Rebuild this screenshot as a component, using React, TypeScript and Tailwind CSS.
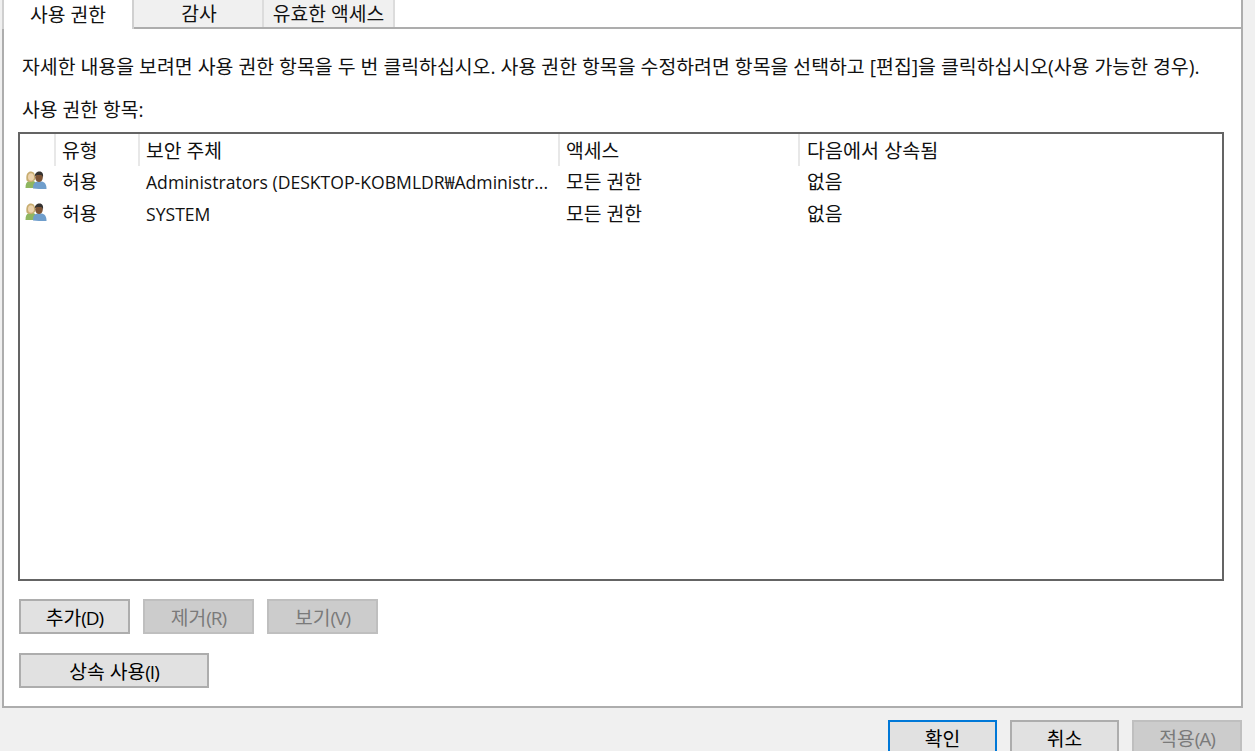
import React from 'react';

const FONT = { fontFamily: '"Open Sans", "Noto Sans CJK KR", sans-serif' };

const UserIcon: React.FC = () => (
  <svg width="22" height="18" viewBox="0 0 22 18" className="shrink-0">
    <path d="M0.500 17 C0.500 13 1.500 10.500 4 10 L8 10 C11 10.500 11.500 13 11.500 17 Z" fill="#8fb660" />
    <path d="M1.500 9.500 C0.500 3 3 0.500 6 0.500 C9.500 0.500 10.500 4 10 9 L7 11 L4 11 Z" fill="#c8ad70" />
    <ellipse cx="6" cy="6" rx="3" ry="3.800" fill="#ecd3ad" />
    <path d="M8 17.500 C8 14 8.500 11.500 12 10.500 L17 10.500 C20.500 11.500 21.500 14 21.500 18 L14 18 Z" fill="#6f9ecc" />
    <ellipse cx="14" cy="6.500" rx="3.800" ry="4.500" fill="#7d5435" />
    <path d="M9.800 5.500 C9.800 2 12 0.500 14.500 0.500 C17.500 0.500 18.500 3 18 6.500 L16.500 4 L11.500 4 Z" fill="#35322f" />
  </svg>
);

const Row: React.FC<{ name: string }> = ({ name }) => (
  <div className="flex h-[32px] items-center">
    <div className="flex w-[36px] justify-end pr-[9px] pb-[4px]"><UserIcon /></div>
    <div className="w-[84px] pl-[6px]">허용</div>
    <div className="w-[420px] pl-[6px] text-[17.6px] whitespace-nowrap">{name}</div>
    <div className="w-[240px] pl-[6px]">모든 권한</div>
    <div className="pl-[7px]">없음</div>
  </div>
);

const Btn: React.FC<{ label: string; hotkey: string; disabled?: boolean; width: string }> = ({ label, hotkey, disabled, width }) => (
  <button
    className={`${width} h-[35px] border-2 pt-[2px] text-center ${disabled ? 'border-[#bfbfbf] bg-[#cccccc] text-[#7a7a7a]' : 'border-[#adadad] bg-[#e1e1e1] text-black'}`}
  >
    {label}<span className="text-[19px] tracking-[-1px]">{hotkey}</span>
  </button>
);

const headers = [
  { label: '', w: 'w-[36px]' },
  { label: '유형', w: 'w-[84px]' },
  { label: '보안 주체', w: 'w-[420px]' },
  { label: '액세스', w: 'w-[240px]' },
];

export default function App() {
  return (
    <div style={FONT} className="flex h-[751px] w-[1255px] flex-col overflow-hidden bg-[#f0f0f0] text-[19.3px] leading-[22px] text-[#111111]">
      <div className="ml-[2px] flex h-[708px] w-[1241px] shrink-0 flex-col border-x-2 border-b-2 border-[#adadad] bg-white">
        <div className="flex h-[29px] shrink-0">
          <div className="-ml-[2px] flex h-[29px] w-[132px] items-center justify-center border-x-2 border-l-[#cfcfcf] border-r-[#d0d0d0] bg-white pt-[1px]">사용 권한</div>
          <div className="flex flex-1 border-b-2 border-[#adadad]">
            <div className="flex h-[27px] w-[130px] items-center justify-center border-r-2 border-[#dcdcdc] bg-[#f0f0f0] pl-[2px]">감사</div>
            <div className="flex h-[27px] w-[131px] items-center justify-center border-r-2 border-[#dcdcdc] bg-[#f0f0f0]">유효한 액세스</div>
          </div>
        </div>
        <div className="flex flex-1 flex-col pl-[14px]">
          <p className="mt-[27px] pl-[4px] whitespace-nowrap text-[19.4px]">자세한 내용을 보려면 사용 권한 항목을 두 번 클릭하십시오. 사용 권한 항목을 수정하려면 항목을 선택하고 [편집]을 클릭하십시오(사용 가능한 경우).</p>
          <p className="mt-[21px] pl-[4px]">사용 권한 항목:</p>
          <div className="mt-[11px] h-[449px] w-[1206px] border-2 border-[#646464] bg-white">
            <div className="flex h-[32px] items-center">
              {headers.map((h) => (
                <div key={h.w} className={`${h.w} h-full border-r-2 border-[#e8e8e8] pl-[6px] leading-[33px]`}>{h.label}</div>
              ))}
              <div className="pl-[7px] leading-[33px] text-[19.6px]">다음에서 상속됨</div>
            </div>
            <Row name="Administrators (DESKTOP-KOBMLDR₩Administr..." />
            <Row name="SYSTEM" />
          </div>
          <div className="mt-[18px] flex gap-[13px] pl-[1px]">
            <Btn label="추가" hotkey="(D)" width="w-[111px]" />
            <Btn label="제거" hotkey="(R)" width="w-[111px]" disabled />
            <Btn label="보기" hotkey="(V)" width="w-[111px]" disabled />
          </div>
          <div className="mt-[19px] pl-[1px]">
            <Btn label="상속 사용" hotkey="(I)" width="w-[190px]" />
          </div>
        </div>
      </div>
      <div className="mt-[12px] flex justify-end gap-[13px] pr-[13px]">
        <button className="h-[35px] w-[109px] shrink-0 border-2 border-[#0078d7] bg-[#e1e1e1] pt-[2px] text-black">확인</button>
        <button className="h-[35px] w-[109px] shrink-0 border-2 border-[#adadad] bg-[#e1e1e1] pt-[2px] text-black">취소</button>
        <button className="h-[35px] w-[110px] shrink-0 border-2 border-[#bfbfbf] bg-[#cccccc] pt-[2px] text-[#7a7a7a]">적용<span className="text-[19px] tracking-[-1px]">(A)</span></button>
      </div>
    </div>
  );
}
